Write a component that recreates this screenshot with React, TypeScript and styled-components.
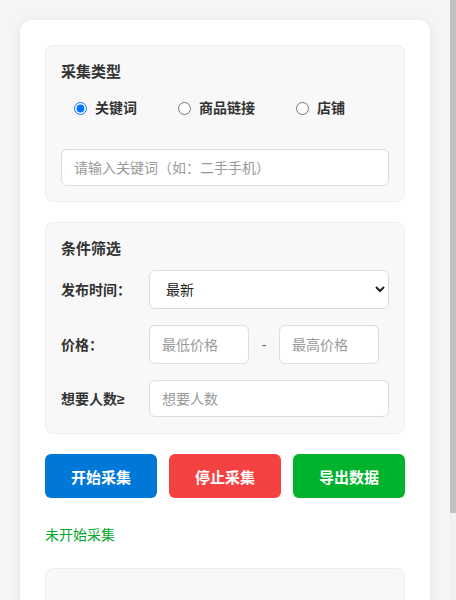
import styled, { createGlobalStyle } from 'styled-components';
import { useState } from 'react';

const GlobalStyle = createGlobalStyle`
  html, body {
    margin: 0;
    padding: 0;
    height: 100%;
    overflow: hidden;
    background: #f5f5f5;
  }
  body {
    font-family: "Liberation Sans", "Noto Sans CJK SC", sans-serif;
    color: #333;
  }
  * {
    box-sizing: border-box;
  }
`;

// scroll container; the 6px strip on the right stands in for the thin scrollbar
const Page = styled.div`
  height: 100vh;
  overflow-y: auto;
  padding: 20px 26px 20px 20px;
  background:
    linear-gradient(#c1c1c1, #c1c1c1) right top / 6px 513px no-repeat,
    linear-gradient(#f1f1f1, #f1f1f1) right top / 6px 100% no-repeat,
    #f5f5f5;
  &::-webkit-scrollbar {
    width: 0;
  }
`;

const Card = styled.div`
  background: #fff;
  border-radius: 12px;
  box-shadow: 0 2px 12px rgba(0, 0, 0, 0.08);
  padding: 25px;
`;

const Section = styled.div<{ $minHeight?: number }>`
  background: #f8f8f8;
  border: 1px solid #eee;
  border-radius: 8px;
  padding: 16px 15px 15px;
  min-height: ${props => props.$minHeight ? `${props.$minHeight}px` : 'auto'};
  & + & {
    margin-top: 20px;
  }
`;

const FilterSection = styled(Section)`
  padding-bottom: 16px;
`;

const SectionTitle = styled.div`
  font-size: 15px;
  font-weight: bold;
  line-height: 20px;
  color: #333;
`;

const RadioGroup = styled.div`
  display: flex;
  align-items: center;
  gap: 41px;
  padding-left: 13px;
  margin: 16px 0 31px;
  height: 20px;
`;

const RadioLabel = styled.label`
  display: flex;
  align-items: center;
  gap: 8px;
  font-size: 14px;
  font-weight: bold;
  line-height: 20px;
  color: #333;
  cursor: pointer;
  input {
    margin: 0;
    width: 13px;
    height: 13px;
  }
`;

const TextInput = styled.input<{ $width?: number; $height?: number }>`
  width: ${props => props.$width ? `${props.$width}px` : '100%'};
  height: ${props => props.$height ?? 37}px;
  border: 1px solid #ddd;
  border-radius: 6px;
  background: #fff;
  padding: 0 12px;
  font-size: 14px;
  font-family: inherit;
  color: #333;
  outline: none;
  &::placeholder {
    color: #999;
  }
`;

const FilterRow = styled.div<{ $first?: boolean }>`
  display: flex;
  align-items: center;
  margin-top: ${props => props.$first ? 11 : 16}px;
`;

const FilterLabel = styled.div`
  width: 88px;
  flex-shrink: 0;
  font-size: 14px;
  font-weight: bold;
  color: #333;
  line-height: 20px;
`;

const Select = styled.select`
  flex: 1;
  height: 39px;
  border: 1px solid #ddd;
  border-radius: 6px;
  background: #fff;
  padding: 0 12px;
  font-size: 14px;
  font-family: inherit;
  color: #222;
  outline: none;
`;

const Dash = styled.span`
  width: 30px;
  text-align: center;
  color: #666;
  font-size: 14px;
`;

const ButtonRow = styled.div`
  display: flex;
  gap: 12px;
  margin-top: 20px;
`;

const ActionButton = styled.button<{ $color: string }>`
  flex: 1;
  height: 44px;
  border: none;
  border-radius: 6px;
  background: ${props => props.$color};
  color: #fff;
  font-size: 15px;
  font-weight: bold;
  font-family: inherit;
  cursor: pointer;
`;

const Status = styled.div`
  color: #00a82d;
  font-size: 14px;
  line-height: 20px;
  margin: 27px 0 23px;
`;

function App() {
    const [type, setType] = useState('keyword');

    const types = [
        { id: 'keyword', label: '关键词' },
        { id: 'link', label: '商品链接' },
        { id: 'shop', label: '店铺' },
    ];

    return (
        <Page>
            <GlobalStyle />
            <Card>
                <Section>
                    <SectionTitle>采集类型</SectionTitle>
                    <RadioGroup>
                        {types.map(t => (
                            <RadioLabel key={t.id}>
                                <input
                                    type="radio"
                                    name="type"
                                    checked={type === t.id}
                                    onChange={() => setType(t.id)}
                                />
                                {t.label}
                            </RadioLabel>
                        ))}
                    </RadioGroup>
                    <TextInput placeholder="请输入关键词（如：二手手机）" />
                </Section>

                <FilterSection>
                    <SectionTitle>条件筛选</SectionTitle>
                    <FilterRow $first>
                        <FilterLabel>发布时间：</FilterLabel>
                        <Select defaultValue="latest">
                            <option value="latest">最新</option>
                            <option value="day">一天内</option>
                            <option value="week">一周内</option>
                        </Select>
                    </FilterRow>
                    <FilterRow>
                        <FilterLabel>价格：</FilterLabel>
                        <TextInput $width={100} $height={39} placeholder="最低价格" />
                        <Dash>-</Dash>
                        <TextInput $width={100} $height={39} placeholder="最高价格" />
                    </FilterRow>
                    <FilterRow>
                        <FilterLabel>想要人数≥</FilterLabel>
                        <TextInput placeholder="想要人数" />
                    </FilterRow>
                </FilterSection>

                <ButtonRow>
                    <ActionButton $color="#0078d7">开始采集</ActionButton>
                    <ActionButton $color="#f44242">停止采集</ActionButton>
                    <ActionButton $color="#00b32c">导出数据</ActionButton>
                </ButtonRow>

                <Status>未开始采集</Status>

                <Section $minHeight={89} />
            </Card>
        </Page>
    );
}

export default App;
